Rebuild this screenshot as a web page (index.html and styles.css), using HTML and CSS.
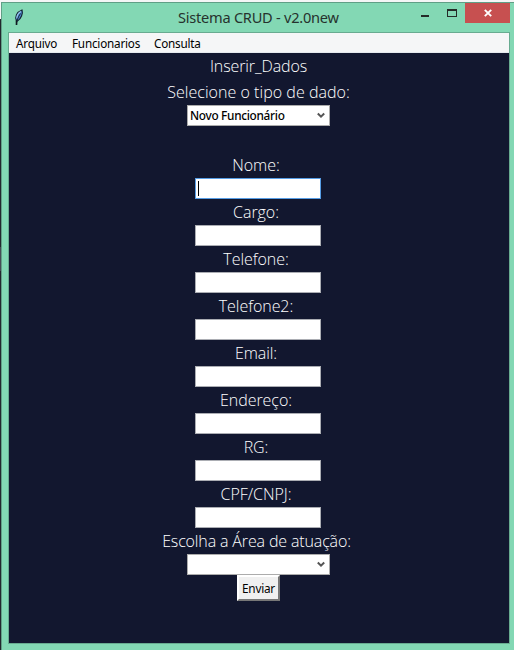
FILE: index.html
```html
<!DOCTYPE html>
<html lang="pt-BR">
<head>
<meta charset="utf-8">
<title>Sistema CRUD - v2.0new</title>
<link rel="stylesheet" href="styles.css">
</head>
<body>
<div class="window">
  <header class="titlebar">
    <svg class="feather" width="10" height="17" viewBox="0 0 10 17">
      <path d="M2.500 12C.5 8.500 2.500 3 8 1 9.200 4.500 7 10 3.500 12Z" fill="#4f86d0" stroke="#142637" stroke-width="1.200"/>
      <path d="M2.800 9.500C2.800 6.500 4.300 4 6.800 2.500" fill="none" stroke="#9cc6ee" stroke-width="1.200"/>
      <path d="M2.500 16C2.500 12 4 8 6.500 4.500" fill="none" stroke="#142637" stroke-width="1"/>
      <path d="M2.500 11.500v4.500" stroke="#101820" stroke-width="1.600"/>
    </svg>
    <h1 class="title">Sistema CRUD - v2.0new</h1>
    <div class="controls">
      <svg width="44" height="20" viewBox="0 0 44 20" shape-rendering="crispEdges">
        <path d="M0 12h8v2H0z" fill="#252b28"/>
        <path d="M26 6h10v8H26zM27 8v5h8V8z" fill="#252b28" fill-rule="evenodd"/>
      </svg>
      <div class="close">
        <svg width="8" height="8" viewBox="0 0 8 8"><path d="M.8.8 7.200 7.200M7.200.8.8 7.200" stroke="#fff" stroke-width="1.900"/></svg>
      </div>
    </div>
  </header>
  <main class="client">
    <nav class="menu"><span class="m1">Arquivo</span><span class="m2">Funcionarios</span><span class="m3">Consulta</span></nav>
    <form class="form">
      <div class="label heading">Inserir_Dados</div>
      <div class="label select-label">Selecione o tipo de dado:</div>
      <div class="combo"><span>Novo Funcionário</span><svg width="8" height="7" viewBox="0 0 8 7"><path d="M.8 1.500 4 4.700 7.200 1.500" fill="none" stroke="#555" stroke-width="2"/></svg></div>
      <div class="gap"></div>
      <div class="label">Nome:</div><div class="field focused"><i class="caret"></i></div>
      <div class="label">Cargo:</div><div class="field"></div>
      <div class="label">Telefone:</div><div class="field"></div>
      <div class="label">Telefone2:</div><div class="field"></div>
      <div class="label">Email:</div><div class="field"></div>
      <div class="label">Endereço:</div><div class="field"></div>
      <div class="label">RG:</div><div class="field"></div>
      <div class="label">CPF/CNPJ:</div><div class="field"></div>
      <div class="label area-label">Escolha a Área de atuação:</div>
      <div class="combo"><span></span><svg width="8" height="7" viewBox="0 0 8 7"><path d="M.8 1.500 4 4.700 7.200 1.500" fill="none" stroke="#555" stroke-width="2"/></svg></div>
      <button class="submit" type="button">Enviar</button>
    </form>
  </main>
</div>
</body>
</html>
```
FILE: styles.css
```css
* { box-sizing: border-box; }
body {
  margin: 0;
  height: 650px;
  padding: 2px 0 0 1px;
  overflow: hidden;
  background: linear-gradient(#f5f6f6 19px, #22262d 19px 247px, #454b55 247px 271px, #22262d 271px);
  font-family: "Open Sans", sans-serif;
}
.window {
  height: 648px;
  padding-left: 6px;
  background: #83d8b4;
  border-top: 1px solid #609f86;
  border-left: 1px solid #609f86;
}
.titlebar { display: flex; height: 29px; }
.feather { margin: 6px 0 0 6px; }
.title {
  margin: 0 0 0 154px;
  width: 163px;
  white-space: nowrap;
  font: 400 14.6px/29px "Noto Sans", sans-serif;
  letter-spacing: -.25px;
  color: #26322d;
}
.controls { display: flex; margin-left: 80px; }
.close {
  width: 45px;
  height: 20px;
  display: flex;
  align-items: center;
  justify-content: center;
  background: #c75050;
}
.client { width: 502px; height: 612px; border: 1px solid #68ab90; background: #12172f; }
.menu {
  display: flex;
  height: 20px;
  padding-left: 7px;
  background: #f5f6f7;
  border-bottom: 1px solid #e5eaee;
  font: 400 11.7px/20px "Noto Sans", sans-serif;
  letter-spacing: -.2px;
  color: #000;
}
.menu span { white-space: nowrap; }
.m1 { width: 56px; }
.m2 { width: 82px; }
.form { display: flex; flex-direction: column; align-items: center; padding-right: 1px; }
.label { height: 26px; font-size: 16px; line-height: 26px; font-weight: 300; letter-spacing: -.05px; color: #fff; white-space: nowrap; padding-right: 5px; }
.heading { padding-right: 0; letter-spacing: -.1px; }
.select-label { padding-right: 0; letter-spacing: .04px; }
.area-label { padding-right: 4px; letter-spacing: -.14px; }
.combo {
  width: 143px;
  height: 21px;
  padding: 0 4px 0 2px;
  display: flex;
  align-items: center;
  justify-content: space-between;
  background: #fff;
  border: 1px solid #acacac;
  font: 500 11.8px/19px "Noto Sans", sans-serif;
  letter-spacing: -.3px;
  color: #000;
}
.gap { height: 26px; }
.field { width: 126px; height: 21px; margin-right: 1px; background: #fff; border: 1px solid #abadb3; }
.focused { border-color: #569de5; }
.caret { display: block; width: 1px; height: 15px; margin: 2px 0 0 2px; background: #000; }
.submit {
  width: 43px;
  height: 26px;
  padding: 0 0 1px;
  background: #f0f0f0;
  border: 2px solid;
  border-color: #fff #777 #777 #fff;
  font: 400 11.8px/20px "Noto Sans", sans-serif;
  letter-spacing: -.25px;
  color: #000;
}
```
